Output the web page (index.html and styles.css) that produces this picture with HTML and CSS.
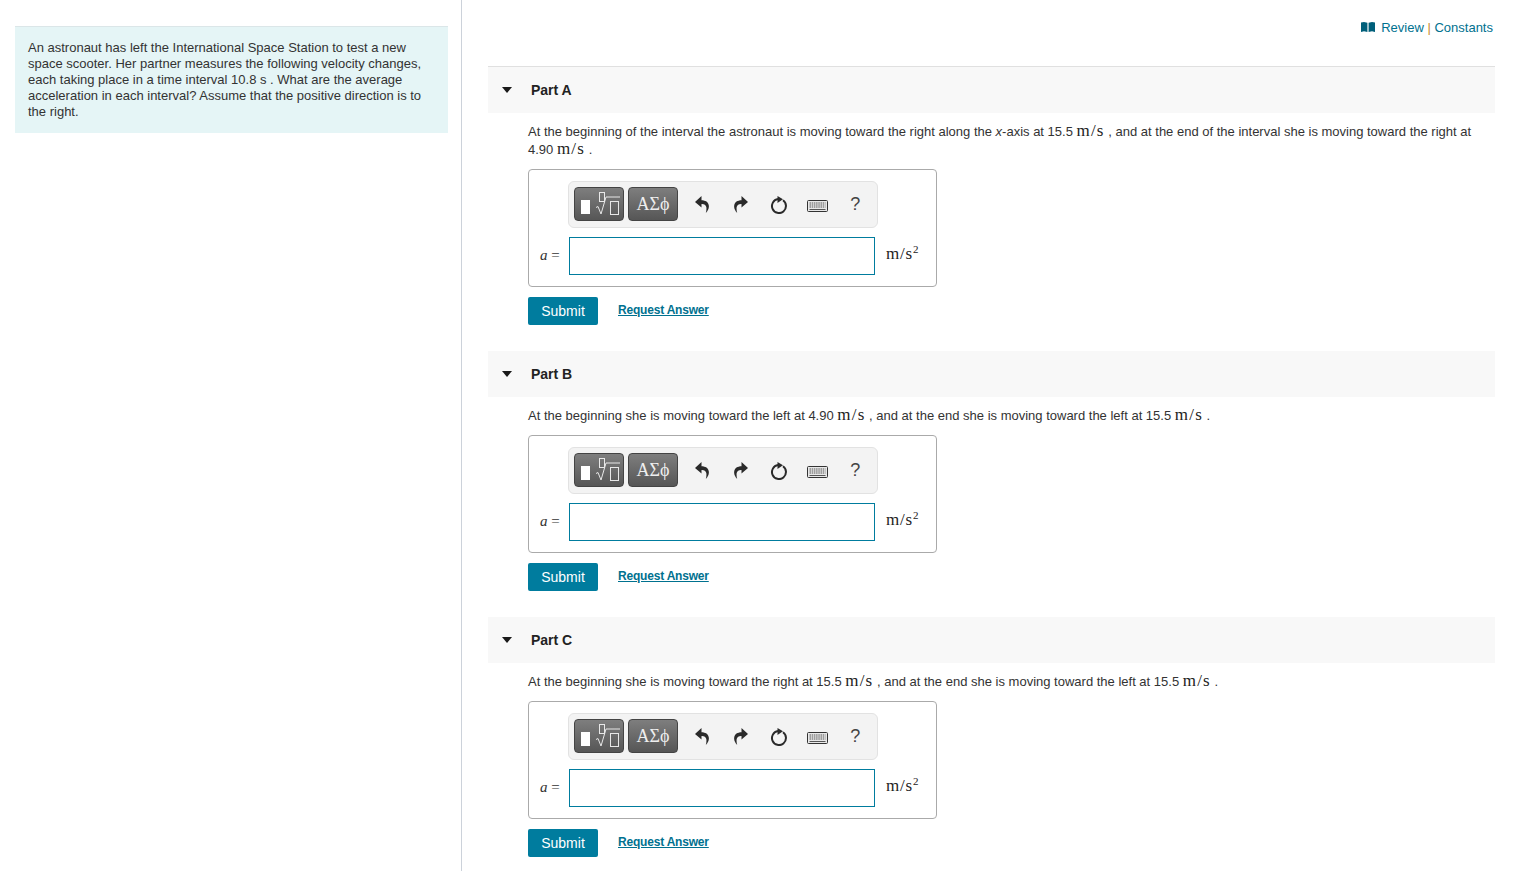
FILE: index.html
```html
<!DOCTYPE html>
<html lang="en">
<head>
<meta charset="utf-8">
<title>Part A</title>
<link rel="stylesheet" href="styles.css">
</head>
<body>
<svg class="defs" width="0" height="0" aria-hidden="true">
  <symbol id="i-undo" viewBox="0 0 14 17"><path d="M6.500 0 0 6 6.500 11.500V8c2.500-.2 4.200.8 4.800 3 .3 1.500.1 4-.5 6 2.200-2.500 3.400-5 3-7.500C13.300 6 10.500 4.300 6.500 4.200z"/></symbol>
  <symbol id="i-reset" viewBox="0 0 18 18"><path d="M8 3.100A7 7 0 1 0 13 4.300" fill="none" stroke="currentColor" stroke-width="2"/><path d="M7.500 0 13 3.300 7.500 7z"/></symbol>
  <symbol id="i-keys" viewBox="0 0 21 12">
    <rect x=".5" y=".5" width="20" height="11" rx="1" fill="#e8e8e8" stroke="#333"/>
    <path d="M2.500 3h16M2.500 5h16M2.500 7h16" stroke="#555" stroke-width="1" stroke-dasharray="1.500 .7"/>
    <path d="M2.500 9.500h16" stroke="#555" stroke-width="1"/>
  </symbol>
  <symbol id="i-root" viewBox="0 0 50 34">
    <rect x="7" y="13" width="9" height="14" fill="#fff"/>
    <rect x="25.500" y="5.500" width="5" height="9" fill="none" stroke="#e8e8e8"/>
    <path d="M22 20.500l2-1 3 7.500 5-17h14" fill="none" stroke="#e8e8e8"/>
    <rect x="36.500" y="14.500" width="8" height="13" fill="none" stroke="#e8e8e8"/>
  </symbol>
</svg>
<div class="page">
  <aside class="side">
    <div class="intro">An astronaut has left the International Space Station to test a new space scooter. Her partner measures the following velocity changes, each taking place in a time interval 10.8 s . What are the average acceleration in each interval? Assume that the positive direction is to the right.</div>
  </aside>
  <main class="main">
    <div class="toplinks">
      <svg class="book" viewBox="0 0 14 10" aria-hidden="true"><path d="M0 .5 3 0l3.400.8V10L3 9.300 0 10zM14 .5 11 0 7.600.8V10l3.400-.7 3 .7z"/></svg>
      <a class="toplink">Review</a><span class="sep"> | </span><a class="toplink">Constants</a>
    </div>

    <section class="part first">
      <header class="part-head"><span class="tri"></span><h2>Part A</h2></header>
      <p class="prompt">At the beginning of the interval the astronaut is moving toward the right along the <i>x</i>-axis at 15.5 <span class="m">m/s</span> , and at the end of the interval she is moving toward the right at 4.90 <span class="m">m/s</span> .</p>
      <div class="answer">
        <div class="toolbar">
          <button class="tool"><svg class="root"><use href="#i-root"/></svg></button>
          <button class="tool greek">ΑΣϕ</button>
          <span class="act"><svg class="ic"><use href="#i-undo"/></svg></span>
          <span class="act"><svg class="ic flip"><use href="#i-undo"/></svg></span>
          <span class="act"><svg class="ic big"><use href="#i-reset"/></svg></span>
          <span class="act"><svg class="ic kb"><use href="#i-keys"/></svg></span>
          <span class="act q">?</span>
        </div>
        <div class="entry"><span class="var"><i>a</i> =</span><input class="field" type="text" aria-label="a"><span class="unit">m/s<sup>2</sup></span></div>
      </div>
      <div class="actions"><button class="submit">Submit</button><a class="req">Request Answer</a></div>
    </section>

    <section class="part">
      <header class="part-head"><span class="tri"></span><h2>Part B</h2></header>
      <p class="prompt">At the beginning she is moving toward the left at 4.90 <span class="m">m/s</span> , and at the end she is moving toward the left at 15.5 <span class="m">m/s</span> .</p>
      <div class="answer">
        <div class="toolbar">
          <button class="tool"><svg class="root"><use href="#i-root"/></svg></button>
          <button class="tool greek">ΑΣϕ</button>
          <span class="act"><svg class="ic"><use href="#i-undo"/></svg></span>
          <span class="act"><svg class="ic flip"><use href="#i-undo"/></svg></span>
          <span class="act"><svg class="ic big"><use href="#i-reset"/></svg></span>
          <span class="act"><svg class="ic kb"><use href="#i-keys"/></svg></span>
          <span class="act q">?</span>
        </div>
        <div class="entry"><span class="var"><i>a</i> =</span><input class="field" type="text" aria-label="a"><span class="unit">m/s<sup>2</sup></span></div>
      </div>
      <div class="actions"><button class="submit">Submit</button><a class="req">Request Answer</a></div>
    </section>

    <section class="part">
      <header class="part-head"><span class="tri"></span><h2>Part C</h2></header>
      <p class="prompt">At the beginning she is moving toward the right at 15.5 <span class="m">m/s</span> , and at the end she is moving toward the left at 15.5 <span class="m">m/s</span> .</p>
      <div class="answer">
        <div class="toolbar">
          <button class="tool"><svg class="root"><use href="#i-root"/></svg></button>
          <button class="tool greek">ΑΣϕ</button>
          <span class="act"><svg class="ic"><use href="#i-undo"/></svg></span>
          <span class="act"><svg class="ic flip"><use href="#i-undo"/></svg></span>
          <span class="act"><svg class="ic big"><use href="#i-reset"/></svg></span>
          <span class="act"><svg class="ic kb"><use href="#i-keys"/></svg></span>
          <span class="act q">?</span>
        </div>
        <div class="entry"><span class="var"><i>a</i> =</span><input class="field" type="text" aria-label="a"><span class="unit">m/s<sup>2</sup></span></div>
      </div>
      <div class="actions"><button class="submit">Submit</button><a class="req">Request Answer</a></div>
    </section>
  </main>
</div>
</body>
</html>
```

FILE: styles.css
```css
* { box-sizing: border-box; }
html, body { margin: 0; height: 871px; overflow: hidden; background: #fff; }
body { font: 13px/16px "Liberation Sans", Arial, sans-serif; color: #333; }
.defs { position: absolute; }
.page { display: flex; height: 871px; }

.side { width: 462px; flex: none; padding: 26px 13px 0 15px; border-right: 1px solid #ccd2da; }
.intro { background: #e5f5f6; border-top: 1px solid #dbe6e8; padding: 13px; height: 107px; }

.main { flex: none; width: 1007px; margin-left: 26px; }
.toplinks { height: 66px; padding: 20px 2px 0 0; display: flex; justify-content: flex-end; align-items: flex-start; white-space: pre; }
.book { width: 14px; height: 10px; fill: #005f7a; margin: 2px 6px 0 0; }
.toplink { color: #00718f; }
.sep { color: #c98a2b; }

.part { margin-bottom: 26px; }
.part.first { border-top: 1px solid #e0e0e0; }
.part-head { height: 46px; background: #f8f8f8; display: flex; align-items: center; padding-left: 14px; }
.tri { width: 0; height: 0; border-left: 5.500px solid transparent; border-right: 5.500px solid transparent; border-top: 6px solid #1a1a1a; margin-right: 18px; }
h2 { margin: 0 0 0 1px; font-size: 14px; font-weight: bold; color: #222; }

.prompt { margin: 0; padding: 10px 20px 10px 40px; line-height: 18px; }
.m { font: 17px/0 "Liberation Serif", serif; color: #222; letter-spacing: 1.2px; }

.answer { width: 409px; height: 118px; margin-left: 40px; border: 1px solid #aaa; border-radius: 4px; padding: 11px 0 0 39px; }
.toolbar { width: 310px; height: 47px; background: #f3f3f3; border: 1px solid #e2e2e2; border-radius: 6px; padding: 5px; display: flex; align-items: flex-start; }
.tool { flex: none; width: 50px; height: 34px; padding: 0; margin: 0 4px 0 0; border: 1px solid #444; border-radius: 4px; background: linear-gradient(#7e7e7e, #565656); color: #eee; display: block; }
.root { width: 50px; height: 34px; display: block; margin: -1px; }
.greek { font: 18px/30px "Liberation Serif", serif; }
.act { flex: none; width: 38.500px; height: 34px; display: flex; align-items: center; justify-content: center; color: #2a2a2a; }
.act:nth-of-type(1) { margin-left: 1px; }
.ic { width: 14px; height: 17px; fill: #2a2a2a; }
.flip { transform: scaleX(-1); }
.big { width: 18px; height: 18px; margin-top: 2px; }
.kb { width: 21px; height: 12px; margin-top: 4px; }
.act.q { width: 36.500px; font: 18px/18px "Liberation Sans", sans-serif; color: #444; }

.entry { display: flex; align-items: center; margin: 9px 0 0 -28px; height: 38px; }
.var { width: 29px; padding-bottom: 2px; font: 15px/16px "Liberation Serif", serif; color: #333; white-space: nowrap; }
.field { width: 306px; height: 38px; margin: 0; padding: 0 4px; border: 1px solid #007c9e; background: #fff; outline: none; }
.unit { margin-left: 11px; padding-bottom: 4px; font: 17px/18px "Liberation Serif", serif; color: #222; white-space: nowrap; letter-spacing: .8px; }
.unit sup { font-size: 11px; line-height: 0; vertical-align: 6px; letter-spacing: 0; }

.actions { display: flex; align-items: flex-start; margin: 10px 0 0 40px; }
.submit { width: 70px; height: 28px; padding: 0; border: 0; border-radius: 2px; background: #007c9e; color: #fff; font: 14px/28px "Liberation Sans", sans-serif; }
.req { margin: 5px 0 0 20px; font: bold 12px/16px "Liberation Sans", sans-serif; letter-spacing: -.2px; color: #00718f; text-decoration: underline; }
```
